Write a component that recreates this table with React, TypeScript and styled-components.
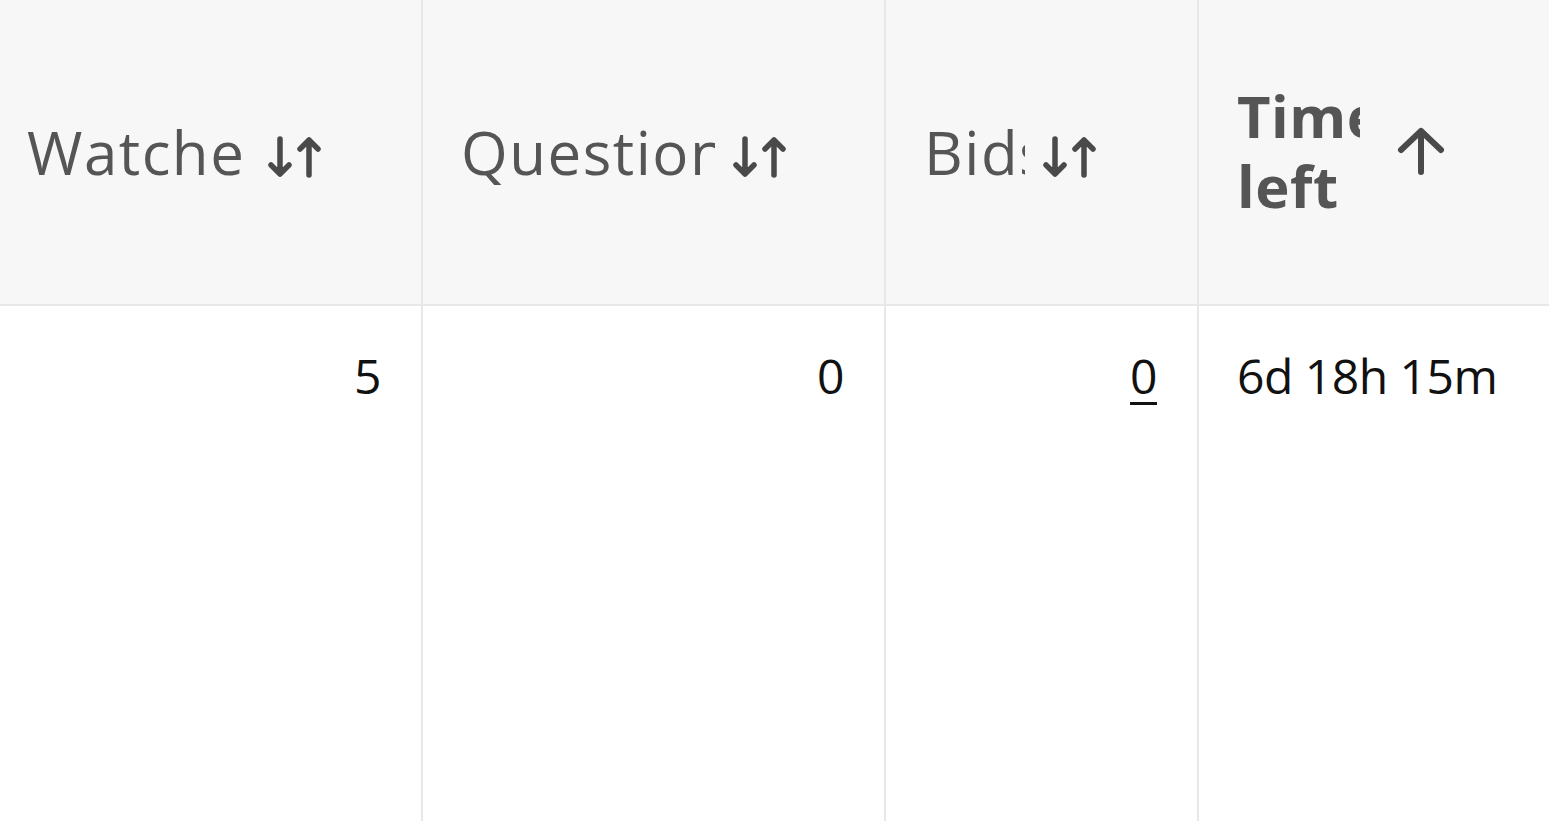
import styled, { createGlobalStyle } from 'styled-components'

const GlobalStyle = createGlobalStyle`
  html, body {
    margin: 0;
    padding: 0;
    background: #ffffff;
    overflow: hidden;
  }
  body {
    font-family: "Open Sans", "Noto Sans", sans-serif;
    font-variant-ligatures: none;
  }
`

const columns = [
  { key: 'watchers', label: 'Watchers', labelWidth: 223, value: '5', align: 'right', sorted: false },
  { key: 'questions', label: 'Questions', labelWidth: 254, value: '0', align: 'right', sorted: false },
  { key: 'bids', label: 'Bids', labelWidth: 101, value: '0', align: 'right', sorted: false, link: true },
  { key: 'time', label: 'Time left', labelWidth: 123, value: '6d 18h 15m', align: 'left', sorted: true },
]

const Table = styled.div`
  display: grid;
  grid-template-columns: 421px 463px 313px 1fr;
  grid-template-rows: 306px 515px;
  width: 1549px;
  height: 821px;
  overflow: hidden;
`

const HeadCell = styled.div<{ $first?: boolean }>`
  display: flex;
  align-items: center;
  gap: 18px;
  padding: 0 0 0 ${p => (p.$first ? '27px' : '38px')};
  background: #f7f7f7;
  border-bottom: 2px solid #e8e8e8;
  border-left: ${p => (p.$first ? 'none' : '2px solid #e8e8e8')};
  color: #555555;
`

const Label = styled.span<{ $width: number; $sorted?: boolean }>`
  display: block;
  flex: none;
  width: ${p => p.$width}px;
  overflow: hidden;
  white-space: ${p => (p.$sorted ? 'normal' : 'nowrap')};
  font-size: ${p => (p.$sorted ? '58px' : '60px')};
  line-height: ${p => (p.$sorted ? '70px' : '72px')};
  font-weight: ${p => (p.$sorted ? 700 : 500)};
  letter-spacing: ${p => (p.$sorted ? '0.5px' : '1.5px')};
  margin-top: ${p => (p.$sorted ? '-2px' : '0')};
`

const SortIcon = styled.svg<{ $sorted?: boolean }>`
  flex: none;
  margin-left: ${p => (p.$sorted ? '19px' : '0')};
  margin-top: ${p => (p.$sorted ? '-2px' : '10px')};
`

const BodyCell = styled.div<{ $first?: boolean; $align: string }>`
  padding: 40px 40px 0 ${p => (p.$first ? '27px' : '38px')};
  border-left: ${p => (p.$first ? 'none' : '2px solid #e8e8e8')};
  text-align: ${p => p.$align};
  font-size: 48px;
  line-height: 60px;
  font-weight: 500;
  letter-spacing: -0.5px;
  color: #111111;
  background: #ffffff;
`

const Link = styled.span`
  text-decoration: underline;
  text-decoration-thickness: 3px;
  text-underline-offset: 8px;
`

const BothArrows = () => (
  <SortIcon width="54" height="42" viewBox="0 0 54 42" fill="none" stroke="#4a4a4a" strokeWidth="5.5" strokeLinecap="round" strokeLinejoin="round">
    <path d="M12 3 V38 M3 29 L12 38 L21 29" />
    <path d="M41 39 V4 M32 13 L41 4 L50 13" />
  </SortIcon>
)

const UpArrow = () => (
  <SortIcon $sorted width="48" height="48" viewBox="0 0 48 48" fill="none" stroke="#4a4a4a" strokeWidth="6" strokeLinecap="round" strokeLinejoin="round">
    <path d="M24 45 V4 M4 23 L24 4 L44 23" />
  </SortIcon>
)

export default function App() {
  return (
    <>
      <GlobalStyle />
      <Table>
        {columns.map((c, i) => (
          <HeadCell key={c.key} $first={i === 0}>
            <Label $width={c.labelWidth} $sorted={c.sorted}>{c.label}</Label>
            {c.sorted ? <UpArrow /> : <BothArrows />}
          </HeadCell>
        ))}
        {columns.map((c, i) => (
          <BodyCell key={c.key} $first={i === 0} $align={c.align}>
            {c.link ? <Link>{c.value}</Link> : c.value}
          </BodyCell>
        ))}
      </Table>
    </>
  )
}
